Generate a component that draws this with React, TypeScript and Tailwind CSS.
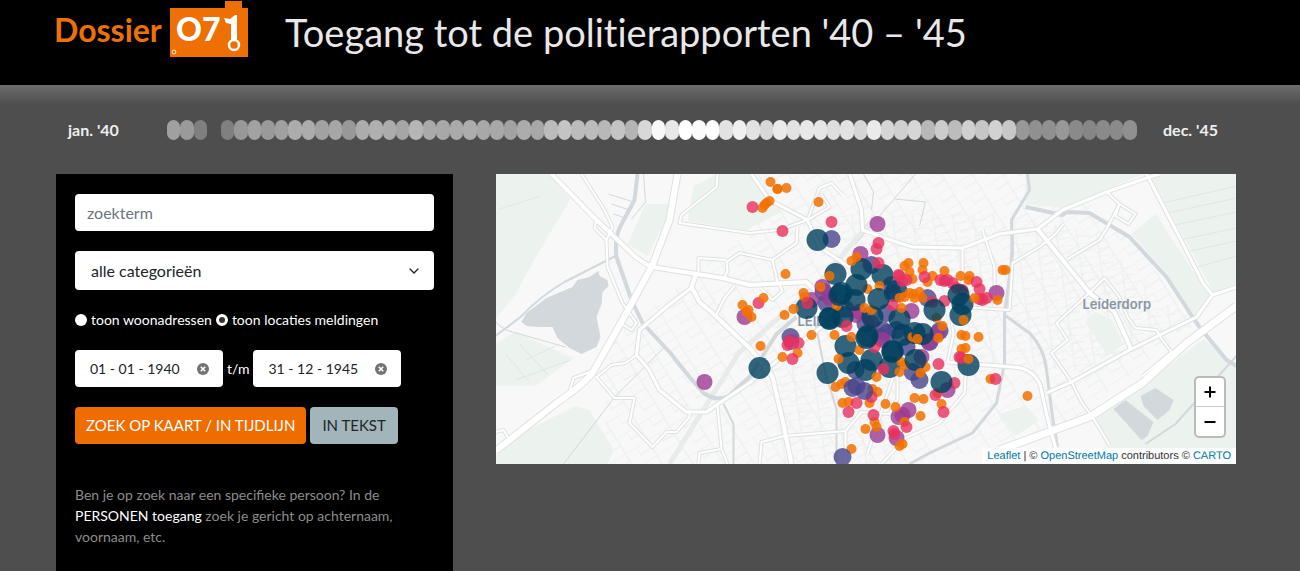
import { useState } from "react";
import { ChevronDown } from "lucide-react";

// Brightness per month, jan. 1940 - dec. 1945 (null = no reports)
const months: (string | null)[] = [
  "a0", "9a", "7f", null, "80", "98", "a2", "9a", "a0", "ac", "ac", "a2",
  "a6", "98", "ac", "b0", "ac", "a6", "b6", "aa", "a8", "aa", "ad", "a8",
  "a8", "a2", "ac", "a8", "bc", "c4", "bc", "bc", "b8", "c4", "b4", "d8",
  "f8", "e8", "ff", "fb", "ff", "e2", "f0", "e2", "d8", "ea", "e2", "e8",
  "e6", "de", "e2", "d6", "ea", "d6", "d0", "d6", "b8", "cc", "bc", "d0",
  "c6", "d2", "c8", "98", "90", "90", "98", "8a", "86", "8a", "8a", "90",
];

const water = [
  { d: "M142 0L139 26L124 54Q119 66 121 83L136 126L147 149L174 178L194 203L208 219Q221 228 233 222L254 203L281 160L301 143", w: 4 },
  { d: "M517 56L516 89L509 139V189L501 229L477 259L434 279L414 290", w: 3 },
  { d: "M509 141L534 159Q549 175 551 196L557 243L562 273", w: 3 },
  { d: "M532 0L534 16L516 46L517 79L511 129L509 141", w: 3 },
  { d: "M530 33L567 41L571 38L594 39L634 63L671 103L697 143L704 153L731 186L741 192", w: 4 },
  { d: "M228 230L238 250V290", w: 2 },
  { d: "M320 150L330 200L341 235V290", w: 2 },
  { d: "M0 162L25 143Q45 122 69 108L120 82", w: 2 },
  { d: "M0 148L10 156L70 173M68 290L120 222L170 172", w: 1 },
  { d: "M148 0L150 28L136 45M113 20L138 28M116 30L134 36M118 40L130 44", w: 1 },
  { d: "M368 0L378 18L376 36M420 0L360 70M400 25L430 28L424 52", w: 1 },
  { d: "M650 270L680 250L741 182", w: 2 },
];

const roads = [
  { d: "M86 0L109 36L117 53L111 66L112 93L127 129L141 149L136 156L126 150", w: 2 },
  { d: "M197 113L172 132L144 156L141 181L153 195L164 216L191 238H211L224 229L254 209L300 172L330 150", w: 3 },
  { d: "M101 203L119 224H139L134 249L157 273L171 258H181L194 243V236", w: 2 },
  { d: "M101 203L116 191L130 189L141 181M97 197L78 204L74 218", w: 2 },
  { d: "M201 99L196 113L204 128L217 139L254 174L264 186L277 203L287 246L296 290", w: 4 },
  { d: "M222 0L221 13L186 41L184 49L254 59L283 56L312 46", w: 2 },
  { d: "M256 0L274 26L312 46L324 73L354 93", w: 3 },
  { d: "M312 46L324 14L336 9L347 21M312 46L334 33L326 20", w: 2 },
  { d: "M302 53L301 69L277 86L244 79L231 88L232 97L228 105M203 98V84L231 86", w: 2 },
  { d: "M277 86L282 109M239 112L229 124L220 142M284 111L287 117L277 126L265 114", w: 2 },
  { d: "M354 0L366 36L367 56L404 69L417 73L467 74L504 60L542 55L567 36L611 18L651 4L664 0", w: 3 },
  { d: "M487 56L499 93V132M467 74V133L514 136L517 89L544 73L560 60L568 50", w: 2 },
  { d: "M452 188L517 193Q538 194 545 212L551 240L560 274", w: 3 },
  { d: "M471 189L469 219L444 249L410 264L386 290M452 188L458 160L455 140L463 128", w: 2 },
  { d: "M289 262L350 257L366 238L394 240L402 225V190M350 257V290M289 262L266 268L264 290", w: 2 },
  { d: "M402 190L385 240L372 280", w: 2 },
  { d: "M651 0L684 63L708 110L717 121L741 113M717 121L701 143L634 176L576 208L551 219", w: 3 },
  { d: "M542 55L594 119L619 138L636 176", w: 4 },
  { d: "M594 119L561 149L572 166L556 179L576 208L586 228L597 243L614 271", w: 2 },
  { d: "M594 119L609 104L624 123L632 143L640 154L661 156L666 165L676 178L647 202", w: 2 },
  { d: "M611 18L624 30L611 55L604 66L572 85M624 30L640 40L633 50L620 42Z", w: 2 },
  { d: "M203 290L204 279L226 275L222 232M226 275L232 290", w: 2 },
  { d: "M101 46L99 54L111 66M0 258L8 256L14 266", w: 2 },
];

const motorways = [
  { d: "M182 0L174 46L157 91L127 146L97 199Q86 212 61 229L0 277", w: 6 },
  { d: "M56 0L101 46L119 63L136 79Q145 88 157 93L201 100L227 104L254 111L311 108L327 123", w: 4 },
  { d: "M741 132L691 169L647 209L594 243L504 276", w: 7 },
];

type Kind = "o" | "k" | "p" | "i" | "t";

const kinds: Record<Kind, { r: number; fill: string; opacity: number }> = {
  o: { r: 5, fill: "#f37100", opacity: 0.85 },
  k: { r: 6, fill: "#e8315f", opacity: 0.8 },
  p: { r: 8, fill: "#9c3a92", opacity: 0.8 },
  i: { r: 9, fill: "#48458c", opacity: 0.8 },
  t: { r: 11, fill: "#003f5c", opacity: 0.8 },
};

const markers: [Kind, number[][]][] = [
  ["i", [[336, 65], [376, 91], [396, 111], [331, 129], [391, 139], [360, 196], [392, 159], [401, 156], [397, 119], [444, 157], [434, 168], [411, 173], [417, 198], [387, 156], [432, 124], [295, 163], [328, 118], [350, 135], [370, 150], [385, 163]]],
  ["p", [[382, 50], [365, 80], [327, 113], [316, 126], [364, 138], [334, 124], [296, 168], [376, 149], [387, 166], [361, 141], [416, 137], [426, 183], [442, 159], [434, 168], [249, 143], [209, 208], [382, 261], [401, 264], [403, 243], [501, 119], [452, 216], [413, 236], [407, 241]]],
  ["t", [[311, 134], [340, 100], [366, 95], [387, 101], [401, 117], [404, 145], [334, 144], [347, 143], [377, 143], [359, 126], [350, 172], [353, 189], [376, 186], [397, 178], [370, 196], [394, 193], [407, 161], [419, 159], [465, 141], [473, 191]]],
  ["o", [
    [275, 8], [282, 15], [282, 15], [291, 14], [274, 27], [271, 29], [269, 31], [267, 34], [323, 28], [290, 100], [289, 141], [298, 135], [308, 119], [309, 123],
    [356, 87], [361, 83], [334, 102], [372, 115], [384, 112], [325, 113], [247, 131], [251, 138], [256, 143], [253, 136], [369, 134], [376, 136], [341, 132],
    [265, 172], [316, 161], [287, 183], [302, 179], [339, 161], [356, 163], [343, 185], [340, 213], [346, 210], [350, 208], [347, 229], [353, 228], [377, 215],
    [382, 218], [374, 229], [390, 230], [400, 233], [370, 255], [379, 248], [381, 253], [356, 275], [381, 203], [364, 176],
    [413, 89], [409, 92], [428, 89], [427, 96], [414, 98], [417, 105], [432, 108], [437, 102], [449, 97], [465, 102], [474, 102], [473, 106],
    [507, 96], [510, 96], [404, 124], [409, 123], [414, 119], [419, 124], [424, 118], [427, 124], [418, 120], [502, 126], [468, 146], [447, 152], [443, 164], [441, 144],
    [466, 161], [470, 162], [483, 163], [466, 175], [470, 174], [417, 163], [422, 165], [406, 188], [409, 191], [404, 198], [425, 199], [430, 193], [495, 205],
    [532, 222], [419, 224], [428, 225], [446, 230], [425, 242], [409, 248], [404, 272], [407, 270], [442, 219], [406, 134],
  ]],
  ["k", [
    [257, 33], [287, 57], [336, 48], [383, 69], [381, 75], [263, 129], [312, 129], [383, 89], [403, 101], [292, 171], [294, 167], [303, 169], [297, 185], [351, 152],
    [353, 238], [361, 229], [378, 241], [398, 257], [399, 260], [376, 223], [388, 195], [379, 173], [404, 102], [411, 106], [407, 107], [429, 103], [445, 106],
    [449, 107], [452, 106], [457, 109], [461, 114], [467, 116], [481, 108], [484, 115], [491, 124], [487, 126], [484, 125], [449, 127], [437, 128], [397, 131],
    [443, 190], [464, 183], [466, 184], [459, 209], [440, 221], [448, 238], [500, 205], [411, 253],
  ]],
  ["i", [[357, 214], [361, 212], [369, 217], [347, 283], [424, 206]]],
  ["t", [[322, 66], [361, 111], [344, 121], [346, 119], [383, 125], [264, 194], [332, 199], [334, 145], [372, 162], [371, 164], [439, 136], [463, 121], [467, 130], [427, 160], [397, 177], [420, 186], [446, 208]]],
  ["o", [[268, 124], [479, 124], [473, 185], [422, 165], [425, 199]]],
];

function Logo() {
  return (
    <a href="#" aria-label="Dossier 071" className="flex items-start text-[#ee7203]">
      <span className="w-[107px] pt-3 text-[32px] leading-9 font-bold">Dossier</span>
      <svg width="80" height="58" viewBox="0 0 80 58" className="ml-2 shrink-0">
        <path d="M1 8H56V1H73V8H79V57H1Z" fill="#ee6f03" />
        <text x="7" y="41" fontFamily="Lato" fontWeight="900" fontSize="32" fill="#fff">
          O7
        </text>
        <path d="M55 18L61 19L66 15H68V40H62V24L57 23Z" fill="#fff" />
        <circle cx="65" cy="45" r="5" fill="#ee6f03" stroke="#fff" strokeWidth="2.5" />
        <circle cx="5" cy="52" r="1.8" fill="none" stroke="#ffd2a8" strokeWidth="1.2" />
      </svg>
    </a>
  );
}

function Timeline() {
  return (
    <div className="flex items-center pt-[33px] pr-[18px] pl-3 text-base font-bold text-[#eee]">
      <span className="w-[99px] shrink-0">jan. '40</span>
      <div className="flex h-5 flex-1">
        {months.map((tone, i) => (
          <span
            key={i}
            className="h-full flex-1 rounded-[7px]"
            style={{ background: tone ? `#${tone}${tone}${tone}` : "transparent" }}
          />
        ))}
      </div>
      <span className="w-[81px] shrink-0 text-right">dec. '45</span>
    </div>
  );
}

function DateField({ label, value }: { label: string; value: string }) {
  const [date, setDate] = useState(value);
  return (
    <div className="flex h-[37px] w-[148px] items-center rounded bg-white pr-3.5 pl-[15px]">
      <input
        aria-label={label}
        value={date}
        onChange={(e) => setDate(e.target.value)}
        className="w-full min-w-0 flex-1 bg-transparent text-sm text-[#212529] outline-none"
      />
      <button type="button" aria-label={`${label} wissen`} onClick={() => setDate("")}>
        <svg width="12" height="12" viewBox="0 0 12 12">
          <circle cx="6" cy="6" r="6" fill="#737373" />
          <path d="M3.8 3.8L8.2 8.2M8.2 3.8L3.8 8.2" stroke="#fff" strokeWidth="1.6" />
        </svg>
      </button>
    </div>
  );
}

function SearchPanel() {
  const [layer, setLayer] = useState("locaties");
  const radio =
    "size-3 shrink-0 appearance-none rounded-full bg-white checked:border-[3px] checked:border-white checked:bg-[#333]";

  return (
    <form className="bg-black px-[19px] pt-5 pb-6" onSubmit={(e) => e.preventDefault()}>
      <input
        type="search"
        aria-label="zoekterm"
        placeholder="zoekterm"
        className="block h-[37px] w-full rounded bg-white px-3 text-base text-[#212529] outline-none placeholder:text-[#6c757d]"
      />
      <div className="relative mt-5">
        <select
          aria-label="categorie"
          className="block h-[39px] w-full appearance-none rounded bg-white px-4 text-base text-[#212529]"
        >
          <option>alle categorieën</option>
        </select>
        <ChevronDown size={16} className="pointer-events-none absolute top-3 right-3 text-[#212529]" />
      </div>

      <div className="mt-5 flex items-center gap-1 text-sm leading-5 text-white">
        <input id="wonen" type="radio" name="layer" checked={layer === "wonen"} onChange={() => setLayer("wonen")} className={radio} />
        <label htmlFor="wonen">toon woonadressen</label>
        <input id="locaties" type="radio" name="layer" checked={layer === "locaties"} onChange={() => setLayer("locaties")} className={radio} />
        <label htmlFor="locaties">toon locaties meldingen</label>
      </div>

      <div className="mt-5 flex items-center gap-1 text-sm text-white">
        <DateField label="Van" value="01 - 01 - 1940" />
        <span>t/m</span>
        <DateField label="Tot en met" value="31 - 12 - 1945" />
      </div>

      <div className="mt-5 flex gap-1 text-[15px]">
        <button type="submit" className="h-[37px] rounded bg-[#ef6c00] px-[11px] text-white">
          ZOEK OP KAART / IN TIJDLIJN
        </button>
        <button type="button" className="h-[37px] rounded bg-[#a2b5bb] px-3 text-[#212529]">
          IN TEKST
        </button>
      </div>

      <p className="mt-10 text-sm leading-[21px] text-[#8c8c8c]">
        Ben je op zoek naar een specifieke persoon? In de{" "}
        <a href="#" className="text-white">
          PERSONEN toegang
        </a>{" "}
        zoek je gericht op achternaam, voornaam, etc.
      </p>
    </form>
  );
}

function CityMap() {
  return (
    <div className="relative h-[290px] self-start overflow-hidden bg-[#f7f8f7]">
      <svg viewBox="0 0 741 290" preserveAspectRatio="xMidYMid slice" className="block h-full w-full">
        <defs>
          <pattern id="streets" width="26" height="18" patternUnits="userSpaceOnUse" patternTransform="rotate(-32)">
            <path d="M0 0H26M0 9H14M14 0V18M0 0V9" fill="none" stroke="#ebeded" strokeWidth="1" />
          </pattern>
          <pattern id="blocks" width="20" height="15" patternUnits="userSpaceOnUse" patternTransform="rotate(-8)">
            <path d="M0 0H20M7 0V15M7 8H20" fill="none" stroke="#ebeded" strokeWidth="1" />
          </pattern>
        </defs>
        <rect width="741" height="290" fill="#f7f8f7" />
        <path d="M110 170L250 60V0H560L640 70L700 150L560 260L420 290H110Z" fill="url(#streets)" />
        <path d="M270 190H400V290H290ZM330 40H500V210H400ZM510 40L600 60L690 150L600 200L520 190Z" fill="url(#blocks)" />
        <g fill="#ecf2ee">
          <path d="M0 0H54L75 25L42 80L20 120L0 145Z" />
          <path d="M0 170L20 158L78 184L40 212L0 212Z" />
          <path d="M20 262L80 232L94 236L118 276L112 290H0V282Z" />
          <path d="M139 55L150 30L178 30L168 50L152 82L132 70Z" />
          <path d="M198 12L222 0H256L286 38L250 56L192 47Z" />
          <path d="M530 0H648L612 15L568 34L530 30Z" />
          <path d="M636 60L660 40L714 122L698 142L672 100Z" />
          <path d="M656 4L664 0H741V110L718 118Z" />
          <path d="M590 148L600 138L616 146L628 170L612 182Z" />
          <path d="M652 208L708 165L741 190V290H620L598 246Z" />
          <path d="M504 240L530 232L544 246L520 262Z" />
        </g>
        <path
          d="M4 35L45 22M663 30L741 12M668 40L741 24M674 52L741 38M684 66L741 54M690 78L741 67M698 94L741 82M30 186L60 172M20 206L75 186M10 180L34 208M24 170L52 200"
          fill="none"
          stroke="#dfe7e2"
        />
        <path
          d="M26 148L31 139L51 124L77 113L82 106L94 103L103 97L104 102L112 106L113 112L107 118L106 130L101 143L105 163L101 173L86 180L74 174L62 164L57 153L44 153L31 152Z"
          fill="#d3d8dc"
        />
        <path d="M618 235L630 226L658 248L652 262L646 266ZM645 222L660 214L678 226L674 236L662 246L648 232Z" fill="#d3d8dc" />
        <path d="M380 42L324 108L244 178L174 290" fill="none" stroke="#e9ebeb" strokeWidth="5" />
        <g fill="none" stroke="#d3d8dc" strokeLinejoin="round">
          {water.map((w) => (
            <path key={w.d} d={w.d} strokeWidth={w.w} />
          ))}
        </g>
        <g fill="none" stroke="#dfe2e2" strokeLinejoin="round">
          {[...roads, ...motorways].map((r) => (
            <path key={r.d} d={r.d} strokeWidth={r.w + 2} />
          ))}
        </g>
        <g fill="none" stroke="#fff" strokeLinejoin="round">
          {[...roads, ...motorways].map((r) => (
            <path key={r.d} d={r.d} strokeWidth={r.w} />
          ))}
        </g>
        <g fontFamily="Inter" fontSize="13" fontWeight="600" fill="#8795a5">
          <text x="587" y="135">Leiderdorp</text>
          <text x="302" y="152">LEIDEN</text>
        </g>
        {markers.map(([kind, points], i) => (
          <g key={i} fill={kinds[kind].fill} fillOpacity={kinds[kind].opacity}>
            {points.map(([x, y], j) => (
              <circle key={j} cx={x} cy={y} r={kinds[kind].r} />
            ))}
          </g>
        ))}
      </svg>

      {/* Zoom controls */}
      <div className="absolute right-2.5 bottom-[26px] flex w-8 flex-col rounded-[5px] border-2 border-[#bbb] bg-white text-black">
        <button type="button" aria-label="Zoom in" className="flex h-[29px] items-center justify-center border-b border-[#ccc]">
          <svg width="12" height="12" viewBox="0 0 12 12">
            <path d="M6 0.5V11.5M0.5 6H11.5" stroke="currentColor" strokeWidth="2" />
          </svg>
        </button>
        <button type="button" aria-label="Zoom out" className="flex h-[29px] items-center justify-center">
          <svg width="12" height="12" viewBox="0 0 12 12">
            <path d="M0.5 6H11.5" stroke="currentColor" strokeWidth="2" />
          </svg>
        </button>
      </div>

      <div className="absolute right-0 bottom-0 bg-white/80 px-[5px] font-['Liberation_Sans',sans-serif] text-[11px] leading-4 text-[#333] [text-rendering:geometricPrecision]">
        <a href="#" className="text-[#0078a8]">Leaflet</a> | ©{" "}
        <a href="#" className="text-[#0078a8]">OpenStreetMap</a> contributors ©{" "}
        <a href="#" className="text-[#0078a8]">CARTO</a>
      </div>
    </div>
  );
}

export default function App() {
  return (
    <div className="flex min-h-screen flex-col bg-[#4e4e4e] font-['Lato',sans-serif]">
      <header className="flex h-[85px] items-start gap-9 bg-black pl-[54px]">
        <Logo />
        <h1 className="pt-2 text-[38px] leading-[48px] whitespace-nowrap text-[#e8e8e8] [font-variant-ligatures:none]">
          Toegang tot de politierapporten '40 – '45
        </h1>
      </header>
      <main className="flex flex-1 flex-col bg-linear-to-b from-[#6c6c6c] to-[#4e4e4e] to-[20px] pr-16 pl-14">
        <Timeline />
        <div className="mt-8 grid flex-1 grid-cols-[397fr_740fr] gap-x-[43px]">
          <SearchPanel />
          <CityMap />
        </div>
      </main>
    </div>
  );
}
